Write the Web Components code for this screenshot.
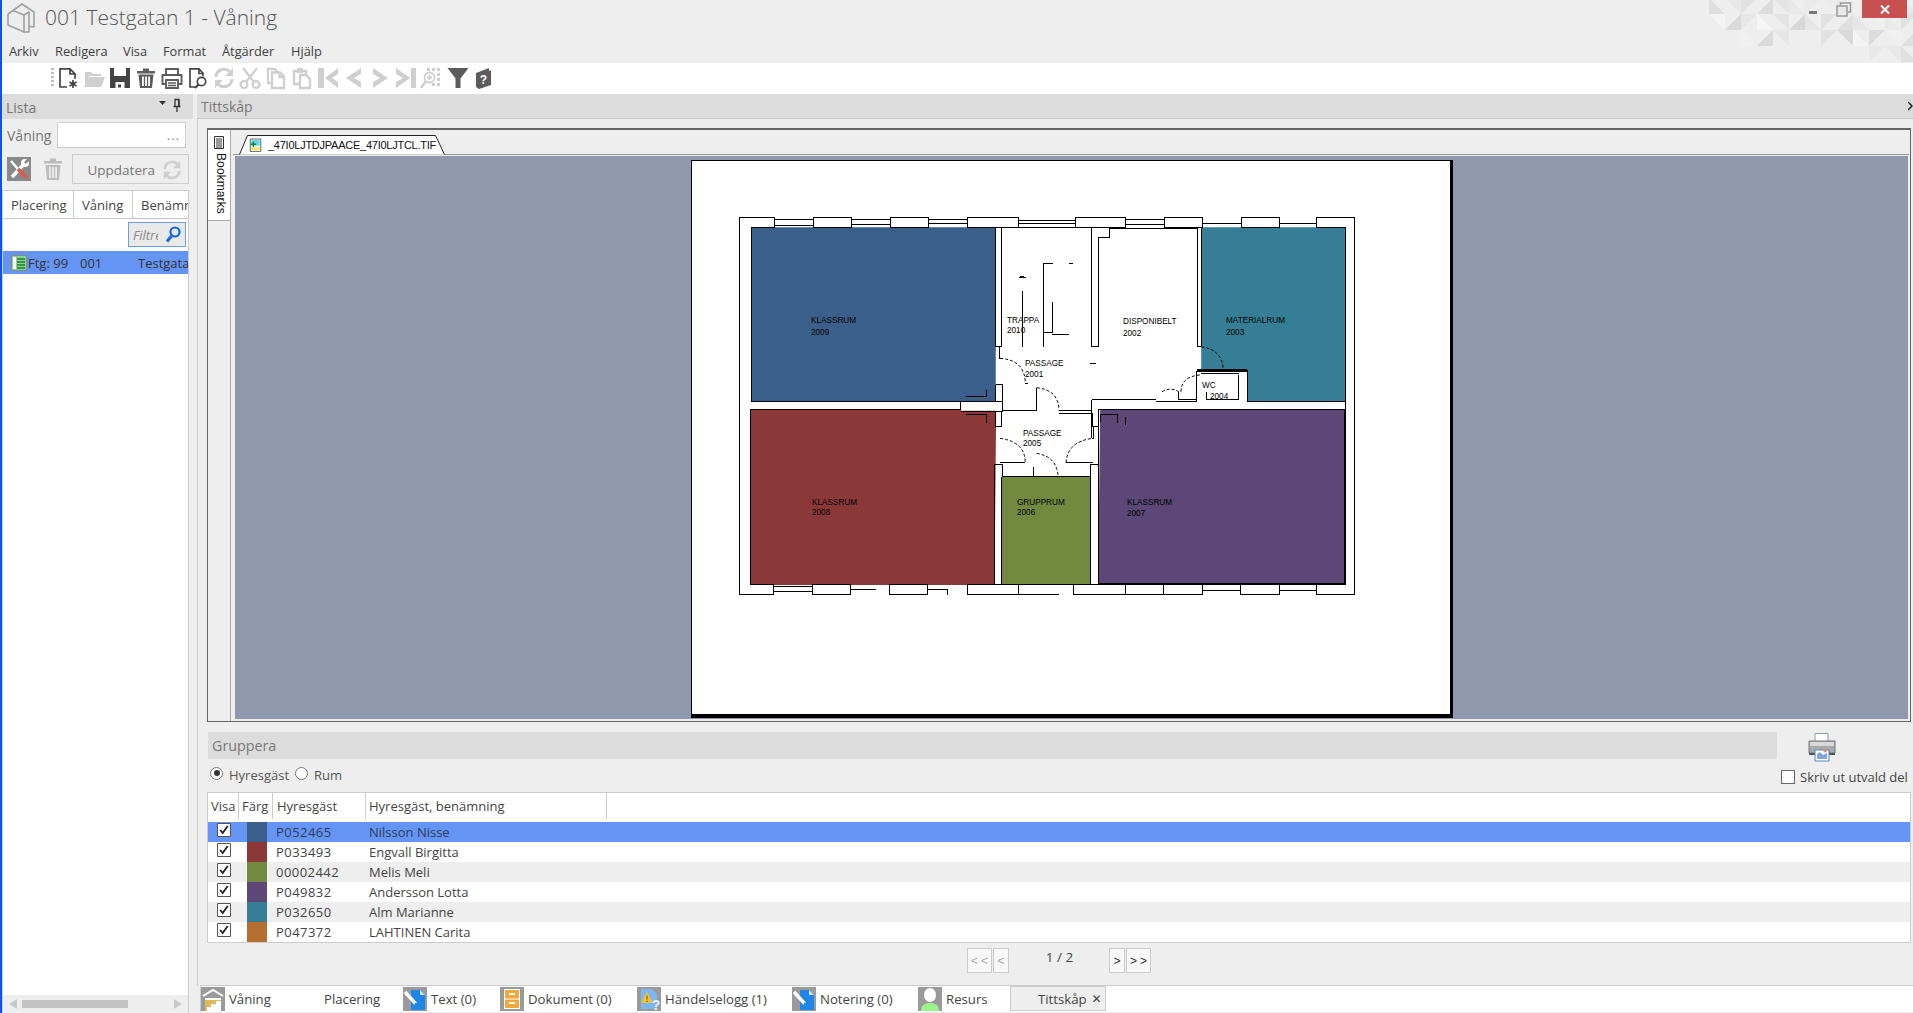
<!DOCTYPE html>
<html lang="sv">
<head>
<meta charset="utf-8">
<title>Våning</title>
<style>
    html, body { margin: 0; height: 100%; overflow: hidden; background: #eeeeee; }
    body { font-family: "Open Sans", "Noto Sans", sans-serif; font-size: 13px; color: #444; }
</style>
</head>
<body>
<app-shell></app-shell>
<script>
const ICONS = {
    newdoc: `<g fill="none" stroke="#444" stroke-width="1.7"><path d="M4 12V2.8h10l5 5v5M14 3v5h5M4 12v9h7"/></g><g stroke="#444" stroke-width="1.7"><path d="M17 14v8M13.5 16l7 4M20.5 16l-7 4"/></g>`,
    open: `<path fill="#cfcfcf" d="M3 9V6h6l2 2h8v2H7l-3 9-1-1zM7 11h16l-4 10H2z"/>`,
    save: `<path fill="#444" fill-rule="evenodd" d="M2 2h20v20H2zM6 2v8h12V2zM7.5 16v6h9v-6z"/><rect x="10" y="18.5" width="3" height="3" fill="#444"/>`,
    trash: `<path fill="#5c5c5c" fill-rule="evenodd" d="M3 5h18v2.4H3zM9 2.5h6V5H9zM4.5 8.5h15L18 22H6zM8 10.5V20h1.8v-9.5zM11.1 10.5V20h1.8v-9.5zM14.2 10.5V20H16v-9.5z"/>`,
    print: `<path fill="none" stroke="#5c5c5c" stroke-width="1.9" d="M6 8V3h12v5M6 18H2.5V9h19v9H18"/><path fill="none" stroke="#5c5c5c" stroke-width="1.9" d="M6 14h12v8H6z"/><path stroke="#5c5c5c" stroke-width="1.4" d="M8 17h8M8 19.5h8"/>`,
    preview: `<path fill="none" stroke="#444" stroke-width="1.7" d="M9 21H4V2.8h9l4 4.5v3M13 3v4.5h4"/><circle cx="15.5" cy="15.5" r="4.2" fill="none" stroke="#444" stroke-width="1.7"/><path stroke="#444" stroke-width="2.2" d="M12.5 18.5 9 22"/>`,
    refresh: `<g fill="none" stroke="#cfcfcf" stroke-width="3"><path d="M4 11a8 8 0 0 1 14-5"/><path d="M20 13a8 8 0 0 1-14 5"/></g><path fill="#cfcfcf" d="M21 2v8h-8zM3 22v-8h8z"/>`,
    cut: `<g fill="none" stroke="#cfcfcf" stroke-width="2.3"><circle cx="6" cy="18.5" r="3.4"/><circle cx="18" cy="18.5" r="3.4"/><path d="M8 16 19 2M16 16 5 2"/></g>`,
    copy: `<path fill="none" stroke="#cfcfcf" stroke-width="2.3" d="M8 17H4V3h7l3 3M8 6.5h8l4 4V22H8zM15.5 7v4H20"/>`,
    paste: `<path fill="none" stroke="#cfcfcf" stroke-width="2.3" d="M9 18H4V5h3M13 5h3v3M10 9h6l4 4v9H10z"/><path fill="#cfcfcf" d="M7 2h6v5H7z"/>`,
    first: `<path fill="#cfcfcf" d="M2 2h6v20H2zM22 2v6l-6 4 6 4v6L9 12z"/>`,
    prev: `<path fill="#cfcfcf" d="M19 2v6l-7 4 7 4v6L4 12z"/>`,
    next: `<path fill="#cfcfcf" d="M5 2v6l7 4-7 4v6l15-10z"/>`,
    last: `<path fill="#cfcfcf" d="M22 2h-5v20h5zM2 2v6l7 4-7 4v6l14-10z"/>`,
    zoom: `<g fill="#cfcfcf"><path d="M7 2h3v3H7zM12 2h3v3h-3zM17 2h3v3h-3zM17 7h3v3h-3zM17 12h3v3h-3zM12 17h3v3h-3zM17 17h3v3h-3z"/></g><circle cx="9.5" cy="11.5" r="5" fill="none" stroke="#cfcfcf" stroke-width="1.8"/><path stroke="#cfcfcf" stroke-width="1.8" d="M9.5 9v5M7 11.5h5"/><path stroke="#cfcfcf" stroke-width="2.4" d="M6 15l-5 7"/>`,
    funnel: `<path fill="#5c5c5c" d="M1.5 2h21l-8 10.5V22h-5V12.5z"/>`,
    book: `<path fill="#5c5c5c" d="M4 7l13-5v3l2-.7V19L7 23l-3-2z"/><text x="11.5" y="18" font-size="12" font-weight="700" text-anchor="middle" fill="#fff" font-family="Liberation Sans, sans-serif">?</text>`,
    house: `<rect width="24" height="24" fill="#9a9a9a"/><path fill="none" stroke="#fff" stroke-width="2" d="M2 9l10-6 10 6"/><path fill="#fff" d="M4 11h16v13H4z"/><path fill="#dcb95a" d="M6 22v-4h4v-3h5v-3h5v-1H4v11z" transform="translate(0 2)"/>`,
    note: `<rect width="24" height="24" fill="#9a9a9a"/><path fill="#1e86e8" d="M8 3h9l5 5v15H8z"/><path fill="#cfe6fb" d="M17 3l5 5h-5z"/><path stroke="#fff" stroke-width="3.4" d="M2 5l11 12"/><path fill="#1e86e8" d="M13 15l3 5-5-2z"/>`,
    cabinet: `<rect width="24" height="24" fill="#9a9a9a"/><path fill="#fff" d="M4 2h16v20H4z"/><path fill="#f2a93b" d="M5 3h14v8.5H5zM5 12.500h14V21H5z"/><path fill="#fff" d="M9 6h6v2H9zM9 15h6v2H9z"/>`,
    event: `<rect width="24" height="24" fill="#9a9a9a"/><path fill="#7db7f2" d="M4 2h11l5 5v15H4z"/><path fill="#f4c430" d="M10 5l6 11H4z"/><path stroke="#a36b00" stroke-width="1.4" d="M10 8.500v4M10 13.500v1.500"/><text x="19" y="23" font-size="14" font-weight="700" text-anchor="middle" fill="#eaf4ff" font-family="Liberation Sans, sans-serif">?</text>`,
    person: `<rect width="24" height="24" fill="#9a9a9a"/><ellipse cx="12" cy="8" rx="6" ry="7" fill="#fff"/><path fill="#9cf28a" d="M3 24c0-6 4-8 9-8s9 2 9 8z"/>`,
    sheetdoc: `<path fill="#fff" stroke="#222" stroke-width="1" d="M1.500 1.500h15v18h-15z"/><path fill="#5fd9e8" d="M3 3h12v8H3z"/><path fill="#f3e27a" d="M3 13h12v5H3z"/><path stroke="#0a8a2a" stroke-width="2" d="M2 9h8M6 5v8"/>`,
    listitem: `<path fill="#8fd08f" stroke="#888" d="M.5.5h15v15H.5z"/><path fill="#fff" d="M2 2h3v12H2z"/><path stroke="#1b7f35" stroke-width="1.500" d="M6 4h8M6 7h8M6 10h8M6 13h8"/>`
};

function svgIcon(name, size, box = 24) {
    return `<svg width="${size}" height="${size}" viewBox="0 0 ${box} ${box}" style="display:block;flex:none">${ICONS[name]}</svg>`;
}

class AppShell extends HTMLElement {
    constructor() {
        super();
        this.attachShadow({ mode: "open" });
    }

    connectedCallback() {
        this.shadowRoot.innerHTML = `
            <style>
                :host { display: flex; flex-direction: column; height: 1013px; border-left: 2px solid #0755f5; box-sizing: border-box; }
                .main { flex: 1; display: flex; min-height: 0; }
            </style>
            <title-bar></title-bar>
            <tool-bar></tool-bar>
            <div class="main">
                <list-panel></list-panel>
                <viewer-panel></viewer-panel>
            </div>
        `;
    }
}

class TitleBar extends HTMLElement {
    constructor() {
        super();
        this.attachShadow({ mode: "open" });
    }

    connectedCallback() {
        // triangle mosaic in the top right corner: col, row, shape, grey
        const mosaic = [
            [0,0,"a",222],[1,0,"b",232],[2,0,"c",226],[3,0,"d",220],[4,0,"b",228],[5,0,"a",232],[6,0,"c",234],[7,0,"b",236],[8,0,"a",232],[9,0,"c",238],[10,0,"a",234],[11,0,"b",232],[12,0,"a",230],
            [0,1,"b",244],[1,1,"d",218],[2,1,"c",230],[3,1,"a",246],[4,1,"b",228],[5,1,"d",216],[6,1,"a",230],[7,1,"c",226],[8,1,"d",224],[9,1,"a",230],[10,1,"b",240],[11,1,"a",234],[12,1,"c",226],
            [2,2,"a",240],[3,2,"d",218],[4,2,"b",230],[7,2,"c",226],[8,2,"b",218],[9,2,"a",244],[10,2,"c",220],[11,2,"b",240],[12,2,"d",224],
            [9,3,"a",238],[10,3,"c",232],[11,3,"b",232],[12,3,"a",224]
        ];
        const shapes = {
            a: (x, y) => `${x},${y} ${x},${y + 16} ${x + 16},${y + 16}`,
            b: (x, y) => `${x},${y} ${x + 16},${y} ${x + 16},${y + 16}`,
            c: (x, y) => `${x},${y} ${x + 16},${y} ${x},${y + 16}`,
            d: (x, y) => `${x + 16},${y} ${x + 16},${y + 16} ${x},${y + 16}`
        };
        const tris = mosaic.map(([c, r, s, g]) =>
            `<polygon points="${shapes[s](c * 16, r * 16 - 2)}" fill="rgb(${g},${g},${g})"/>`).join("");
        this.shadowRoot.innerHTML = `
            <style>
                :host { display: block; position: relative; height: 63px; background: #eeeeee; }
                .top { display: flex; align-items: center; height: 35px; padding-left: 5px; }
                .logo { margin-right: 10px; flex: none; }
                h1 { margin: 0; font: 300 21px "Open Sans", "Noto Sans", sans-serif; color: #555; white-space: nowrap; position: relative; top: -1px; }
                nav { display: flex; height: 28px; padding-top: 3px; box-sizing: border-box; align-items: center; font-size: 12.8px; color: #404040; padding-left: 7px; }
                nav span { white-space: nowrap; }
                .mosaic { position: absolute; right: 0; top: 0; }
                .winbtn { position: absolute; }
                .min { left: 1807px; top: 11px; width: 8px; height: 3px; background: #777; }
                .restore { left: 1834px; top: 2px; }
                .close { left: 1860px; top: 0; width: 45px; height: 18px; background: #c75050; display: flex; align-items: center; justify-content: center; }
            </style>
            <svg class="mosaic" width="204" height="63" viewBox="0 0 204 63">${tris}</svg>
            <div class="top">
                <svg class="logo" width="28" height="31" viewBox="0 0 28 31">
                    <g fill="none" stroke="#a0a0a0" stroke-width="1.6" stroke-linejoin="round">
                        <path d="M1 12 15 2l12 8v15l-5-.6"/><path d="M1 12v11l16 7V13L6 8.500"/><path d="M17 13l5-3v20l-5 0"/>
                    </g>
                </svg>
                <h1>001 Testgatan 1 - Våning</h1>
            </div>
            <nav>
                <span style="width:46px">Arkiv</span><span style="width:68px">Redigera</span><span style="width:40px">Visa</span><span style="width:59px">Format</span><span style="width:69px">Åtgärder</span><span>Hjälp</span>
            </nav>
            <div class="winbtn min"></div>
            <svg class="winbtn restore" width="16" height="15" viewBox="0 0 16 15"><g fill="none" stroke="#999" stroke-width="1.500"><path d="M4.500 3V1h10v9h-3"/><path d="M1 4h10v10H1z"/></g></svg>
            <div class="winbtn close"><svg width="10" height="9" viewBox="0 0 10 9"><path stroke="#fff" stroke-width="2" d="M1 .5l8 8M9 .5l-8 8"/></svg></div>
        `;
    }
}

class ToolBar extends HTMLElement {
    constructor() {
        super();
        this.attachShadow({ mode: "open" });
    }

    connectedCallback() {
        const names = ["newdoc", "open", "save", "trash", "print", "preview", "refresh", "cut", "copy", "paste", "first", "prev", "next", "last", "zoom", "funnel", "book"];
        this.shadowRoot.innerHTML = `
            <style>
                :host { display: flex; align-items: center; height: 31px; background: #fff; padding-bottom: 1px; box-sizing: border-box; }
                .grip { width: 3px; height: 20px; margin-left: 49px; margin-right: 1px; background: repeating-linear-gradient(#bbb 0 2px, transparent 2px 4px); }
                .btn { width: 26px; display: flex; justify-content: center; }
            </style>
            <div class="grip"></div>
            ${names.map(n => `<div class="btn">${svgIcon(n, 24)}</div>`).join("")}
        `;
    }
}

class PanelHeader extends HTMLElement {
    constructor() {
        super();
        this.attachShadow({ mode: "open" });
    }

    connectedCallback() {
        this.shadowRoot.innerHTML = `
            <style>
                :host { display: flex; align-items: center; justify-content: space-between; height: 25px; background: #dcdcdc; color: #777; font-size: 14px; line-height: 26px; padding: 2px 0 0 4px; box-sizing: border-box; white-space: nowrap; }
                .tools { display: flex; align-items: center; position: relative; top: -1px; }
            </style>
            <slot></slot>
            <div class="tools"><slot name="tools"></slot></div>
        `;
    }
}

class ListPanel extends HTMLElement {
    constructor() {
        super();
        this.attachShadow({ mode: "open" });
    }

    connectedCallback() {
        this.shadowRoot.innerHTML = `
            <style>
                :host { display: flex; flex-direction: column; width: 191px; flex: none; margin-right: 4px; }
                .form { padding: 2px 4px 0 5px; width: 182px; }
                .floor { display: flex; align-items: center; height: 28px; color: #777; }
                .floor label { width: 50px; font-size: 14px; }
                .floor .box { width: 129px; height: 26px; background: #fff; border: 1px solid #ccc; color: #888; text-align: right; padding-right: 5px; box-sizing: border-box; line-height: 24px; font-size: 13px; letter-spacing: 1px; }
                .actions { display: flex; align-items: center; height: 30px; margin-top: 5px; }
                .wrench { display: block; margin-right: 13px; flex: none; }
                .bin { margin-right: 10px; }
                .update { width: 117px; height: 30px; border: 1px solid #ccc; box-sizing: border-box; display: flex; align-items: center; justify-content: flex-end; gap: 6px; padding: 1px 5px 0 0; color: #777; font-size: 13.5px; margin-right: -1px; }
                .list { flex: 1; width: 187px; margin-top: 6px; background: #fff; border: 1px solid #ccc; border-bottom: 0; box-sizing: border-box; display: flex; flex-direction: column; overflow: hidden; }
                .head { display: grid; grid-template-columns: 71px 59px 1fr; height: 27px; border-bottom: 1px solid #ccc; flex: none; margin-bottom: -1px; }
                .head span { padding-left: 8px; line-height: 28px; color: #444; border-right: 1px solid #ccc; white-space: nowrap; overflow: hidden; }
                .head span:last-child { border-right: 0; }
                .filter { flex: none; height: 34px; display: flex; justify-content: flex-end; padding: 4px 2px 0 0; box-sizing: border-box; }
                .fbox { width: 58px; height: 25px; background: #e9e9e9; border: 1px solid #6f9fd8; box-sizing: border-box; display: flex; align-items: center; justify-content: space-between; padding: 0 4px 0 4px; color: #888; font-style: italic; font-size: 13px; }
                .fbox b { font-weight: 400; width: 25px; overflow: hidden; white-space: nowrap; }
                .row { display: grid; grid-template-columns: 65px 70px 1fr; height: 23px; flex: none; background: #6495f5; align-items: center; color: #333; white-space: nowrap; margin-top: -1px; }
                .row span { overflow: hidden; display: flex; align-items: center; min-width: 0; }
                .row .first { padding-left: 8px; gap: 1px; }
                .row .first b { font-weight: 400; }
                .spacer { flex: 1; }
                .scroll { flex: none; height: 18px; background: #eeeeee; display: flex; align-items: center; justify-content: space-between; padding: 0 6px; }
                .track { flex: 1; margin: 0 4px 0 5px; }
                .track div { width: 106px; height: 8px; background: #c2c2c2; }
            </style>
            <panel-header>Lista
                <svg slot="tools" width="30" height="20" viewBox="0 0 30 20" style="margin-right:4px">
                    <path fill="#333" d="M0 4h7L3.500 8z"/>
                    <path fill="none" stroke="#333" stroke-width="1.300" d="M16 2.500h4v7h-4zM14.500 9.500h7M18 10v5"/><path fill="#333" d="M19 3h1.500v6H19z"/>
                </svg>
            </panel-header>
            <div class="form">
                <div class="floor"><label>Våning</label><div class="box">...</div></div>
                <div class="actions">
                    <svg class="wrench" width="24" height="24" viewBox="0 0 24 24">
                        <rect width="24" height="24" fill="#8a8a8a"/>
                        <path stroke="#fff" stroke-width="3.500" d="M5 20 17 7"/><circle cx="18" cy="6" r="4" fill="#fff"/><path stroke="#8a8a8a" stroke-width="2.500" d="M18 6l4-4"/>
                        <path stroke="#fff" stroke-width="2.500" d="M4 4l7 8"/><path stroke="#e2574c" stroke-width="3.500" d="M11 12l9 9"/>
                    </svg>
                    <div class="bin"><svg width="18" height="24" viewBox="0 0 18 24" style="display:block"><path fill="#bcbcbc" fill-rule="evenodd" d="M0 4h18v2.500H0zM6 1.500h6V4H6zM1.500 8h15L15 23H3zM5 10v11h1.800V10zM8.100 10v11h1.800V10zM11.200 10v11H13V10z"/></svg></div>
                    <div class="update">Uppdatera ${svgIcon("refresh", 22)}</div>
                </div>
            </div>
            <div class="list">
                <div class="head"><span>Placering</span><span>Våning</span><span>Benämning</span></div>
                <div class="filter"><div class="fbox"><b>Filtrera</b>
                    <svg width="16" height="17" viewBox="0 0 16 17" style="flex:none"><circle cx="10" cy="6" r="4.500" fill="none" stroke="#1565e0" stroke-width="2.200"/><path stroke="#1565e0" stroke-width="3" d="M6.500 10 2 15.500"/></svg>
                </div></div>
                <div class="row"><span class="first">${svgIcon("listitem", 16, 16)}<b>Ftg: 9999</b></span><span style="padding-left:12px">001</span><span>Testgatan 1</span></div>
                <div class="spacer"></div>
                <div class="scroll">
                    <svg width="8" height="10" viewBox="0 0 8 10"><path fill="#c8c8c8" d="M8 0v10L0 5z"/></svg>
                    <div class="track"><div></div></div>
                    <svg width="8" height="10" viewBox="0 0 8 10"><path fill="#c8c8c8" d="M0 0v10l8-5z"/></svg>
                </div>
            </div>
        `;
    }
}

class ViewerPanel extends HTMLElement {
    constructor() {
        super();
        this.attachShadow({ mode: "open" });
    }

    connectedCallback() {
        this.shadowRoot.innerHTML = `
            <style>
                :host { flex: 1; min-width: 0; display: flex; flex-direction: column; }
                .head { border-bottom: 1px solid #c8c8c8; }
                .body { flex: 1; border-left: 1px solid #ccc; padding: 9px 2px 0 9px; display: flex; flex-direction: column; min-height: 0; }
            </style>
            <panel-header class="head">Tittskåp
                <svg slot="tools" width="5" height="10" viewBox="0 0 5 10"><path fill="none" stroke="#222" stroke-width="1.500" d="M0 1l4 4-4 4"/></svg>
            </panel-header>
            <div class="body">
                <doc-viewer><floor-plan></floor-plan></doc-viewer>
                <group-bar></group-bar>
                <tenant-table></tenant-table>
                <page-nav></page-nav>
            </div>
            <page-tabs></page-tabs>
        `;
    }
}

class DocViewer extends HTMLElement {
    constructor() {
        super();
        this.attachShadow({ mode: "open" });
    }

    connectedCallback() {
        this.shadowRoot.innerHTML = `
            <style>
                :host { display: grid; grid-template-columns: 23px 1fr; height: 594px; flex: none; border: 1px solid #666; border-top-width: 2px; box-sizing: border-box; background: #eeeeee; }
                .side { border-right: 1px solid #aaa; }
                .bm { background: #fff; height: 91px; border-bottom: 1px solid #aaa; box-sizing: border-box; padding: 6px 0 0 5px; }
                .bm span { writing-mode: vertical-rl; font: 12px "Liberation Sans", sans-serif; color: #111; margin: 4px 0 0 1px; display: block; letter-spacing: .1px; }
                .wrap { min-width: 0; display: flex; flex-direction: column; padding: 0 2px 2px 4px; }
                .strip { height: 25px; flex: none; position: relative; border-bottom: 1px solid #999; box-sizing: border-box; margin-right: -1px; margin-left: -2px; }
                .tab { position: absolute; left: 6px; bottom: -1px; width: 206px; height: 20px; }
                .tab svg.shape { position: absolute; left: 0; top: 0; }
                .tab .ic { position: absolute; left: 10px; top: 3px; }
                .tab b { position: absolute; left: 29px; top: 4px; font: 400 11px "Liberation Sans", sans-serif; color: #111; white-space: nowrap; letter-spacing: -.25px; }
                .stage { flex: 1; background: #9098ad; display: flex; justify-content: center; align-items: flex-start; padding: 4px 0 0 1px; min-height: 0; margin-top: 1px; }
            </style>
            <div class="side">
                <div class="bm">
                    <svg width="12" height="13" viewBox="0 0 12 13" style="display:block"><path fill="#fff" stroke="#333" d="M1.500.5h9v12h-9z"/><path stroke="#333" d="M3 3h6M3 5h6M3 7h6M3 9h6M3 11h6"/></svg>
                    <span>Bookmarks</span>
                </div>
            </div>
            <div class="wrap">
                <div class="strip">
                    <div class="tab">
                        <svg class="shape" width="206" height="20" viewBox="0 0 206 20"><path fill="#fff" stroke="#222" d="M.5 19.500 8.500.5h188l9 19"/></svg>
                        <svg class="ic" width="13" height="14" viewBox="0 0 18 20">${ICONS.sheetdoc}</svg>
                        <b>_47I0LJTDJPAACE_47I0LJTCL.TIF</b>
                    </div>
                </div>
                <div class="stage"><slot></slot></div>
            </div>
        `;
    }
}

class FloorPlan extends HTMLElement {
    constructor() {
        super();
        this.attachShadow({ mode: "open" });
    }

    connectedCallback() {
        const labels = [
            ["KLASSRUM", 812, 323], ["2009", 812, 335],
            ["TRAPPA", 1008, 323], ["2010", 1008, 333],
            ["PASSAGE", 1026, 366], ["2001", 1026, 377],
            ["DISPONIBELT", 1124, 324], ["2002", 1124, 336],
            ["MATERIALRUM", 1227, 323], ["2003", 1227, 335],
            ["WC", 1203, 388], ["2004", 1211, 399],
            ["PASSAGE", 1024, 436], ["2005", 1024, 446],
            ["KLASSRUM", 813, 505], ["2008", 813, 515],
            ["GRUPPRUM", 1018, 505], ["2006", 1018, 515],
            ["KLASSRUM", 1128, 505], ["2007", 1128, 516]
        ];
        // sheet starts at x 691, y 160 on the screen; plan crop was taken at 720,200
        const text = labels.map(([t, x, y]) => `<text x="${x - 693}" y="${y - 161}">${t}</text>`).join("");
        const walls = `
            M46 52V1185H128V1155H72 M46 52H130V82H75V604H572 M75 628H572V604H670V634H572 M75 628H72V1155
            M130 60H222 M130 78H222 M222 52H312V82H222Z M312 60H405 M312 74H405 M405 52H495V82H405Z M495 60H588 M495 72H588
            M588 52H710V82H588Z M710 62H845 M710 72H845 M845 52H962V82H845Z M962 58H1055 M962 74H1055 M1055 52H1145V82H1055Z
            M1145 70H1238 M1238 52H1330V82H1238Z M1330 72H1418 M1418 52H1508V1185H1418V1155H1486V82H1418Z
            M128 1160H220 M128 1174H220 M220 1155H310V1185H220Z M310 1168H370 M403 1155H493V1185H403Z M493 1170H540V1185
            M588 1155H708V1185H588Z M708 1158V1185H805 M840 1155H962V1185H840Z M962 1160V1185H1053 M1053 1155H1145V1185H1053Z
            M1145 1172H1236 M1236 1155H1328V1185H1236Z M1328 1172H1418
            M655 82V440H669V82 M669 82H883V440 M900 112V440H883 M900 112H926V85H1135V440H1143V82
            M718 272V440 M769 440V190H790 M790 305V398H769 M830 192H838 M788 405H830 M718 228l-8 6h16z
            M655 555H670V604 M655 555V604 M665 440V475H672 M725 552H732
            M670 632H752V563 M805 632H883 M805 642H883 M883 600V715 M883 600H1035 M1035 605H1132
            M1132 512H1252V604H1486V82 M1132 512V604 M1232 525V600H1155V575 M1090 575V600H1132 M1143 520H1232
            M900 628H1484V1150H898V628 M885 640V680H900V628 M883 715H888V680
            M655 634V680H669V634 M652 795H670V830H880V795H900 M652 795V1155 M669 830V1155H880V830
            M665 788H725 M822 788H885 M745 800V830 M585 590H633V570 M585 643H633V668 M903 665V643H945V668 M963 650V675 M880 490H893
            M898 1155H1484
        `;
        const doors = `
            M665 475Q725 480 725 550 M752 563Q805 570 805 632 M665 715Q725 725 725 788 M752 760Q800 770 803 828
            M822 788Q825 725 885 715 M1143 440Q1195 450 1195 510 M1095 575Q1095 530 1140 525 M1050 575Q1070 560 1090 575
        `;
        this.shadowRoot.innerHTML = `
            <style>
                :host { display: block; width: 758px; height: 553px; background: #fff; border: solid #000; border-width: 1px 3px 4px 1px; flex: none; position: relative; }
                svg { position: absolute; left: 0; top: 0; display: block; }
                text { font: 8.2px "Liberation Sans", sans-serif; fill: #000; }
            </style>
            <svg width="758" height="553" viewBox="0 0 758 553">
                <!-- measurements come from a stretched crop, x and y scale differently -->
                <g transform="translate(28 39) scale(.421 .33333)">
                    <path fill="#3a5f8a" d="M75 82H655V604H75z"/>
                    <path fill="#357e95" d="M1143 82H1486V604H1252V512H1143z"/>
                    <path fill="#8b3838" d="M72 628H656L652 1155H72z"/>
                    <path fill="#72893f" d="M669 830H880V1155H669z"/>
                    <path fill="#5d4777" d="M903 628H1486L1484 1152H898z"/>
                    <path fill="#fff" d="M572 606H670V632H572z"/>
                    <g fill="none" stroke="#000" stroke-width="1" shape-rendering="crispEdges">
                        <path d="${walls}" vector-effect="non-scaling-stroke"/>
                        <path d="M1132 512H1252" stroke-width="3" vector-effect="non-scaling-stroke"/>
                    </g>
                    <path d="${doors}" fill="none" stroke="#000" stroke-width="1" stroke-dasharray="3 2" vector-effect="non-scaling-stroke"/>
                </g>
                ${text}
            </svg>
        `;
    }
}

class GroupBar extends HTMLElement {
    constructor() {
        super();
        this.attachShadow({ mode: "open" });
    }

    connectedCallback() {
        this.shadowRoot.innerHTML = `
            <style>
                :host { display: grid; grid-template-columns: 1569px 1fr; height: 60px; margin: 10px 0 0 1px; flex: none; color: #555; }
                .title { height: 27px; background: #dcdcdc; padding-left: 4px; line-height: 28px; font-size: 14.3px; color: #777; }
                .radios { display: flex; align-items: center; height: 32px; padding-left: 2px; }
                .dot { width: 11px; height: 11px; border: 1px solid #777; border-radius: 50%; background: #fff; position: relative; top: -2px; margin-right: 6px; }
                .dot.on::after { content: ""; position: absolute; left: 2.500px; top: 2.500px; width: 6px; height: 6px; border-radius: 50%; background: #333; }
                .radios span { margin-right: 6px; }
                .print { padding-left: 4px; display: flex; flex-direction: column; align-items: flex-start; }
                .pic { margin: 0 0 6px 26px; flex: none; }
                .sel { display: flex; align-items: center; gap: 5px; white-space: nowrap; color: #444; font-size: 13px; }
                .cb { width: 12px; height: 12px; border: 1px solid #666; background: #fff; flex: none; }
            </style>
            <div>
                <div class="title">Gruppera</div>
                <div class="radios"><div class="dot on"></div><span>Hyresgäst</span><div class="dot"></div><span>Rum</span></div>
            </div>
            <div class="print">
                <svg class="pic" width="30" height="30" viewBox="0 0 30 30">
                    <path fill="#fff" stroke="#8a9bb5" d="M8 1.500h13v9H8z"/>
                    <path fill="#a9a9a9" stroke="#777" d="M2 9h26v12H2z"/><path fill="#d8d8d8" d="M3 10h24v4H3z"/>
                    <path fill="#555" d="M2 21h26v2H2z"/>
                    <path fill="#fff" stroke="#5b84b8" d="M8 18h14v11H8z"/><path fill="#7ea6d8" d="M10 22l3-2 3 3 4-2v6H10z"/><circle cx="18" cy="19" r="1.500" fill="#e88a4a"/>
                </svg>
                <div class="sel"><div class="cb"></div>Skriv ut utvald del</div>
            </div>
        `;
    }
}

class TenantTable extends HTMLElement {
    constructor() {
        super();
        this.attachShadow({ mode: "open" });
    }

    connectedCallback() {
        const rows = [
            ["P052465", "Nilsson Nisse", "#3a5f8a", "sel"],
            ["P033493", "Engvall Birgitta", "#8b3838", ""],
            ["00002442", "Melis Meli", "#72893f", "alt"],
            ["P049832", "Andersson Lotta", "#5d4777", ""],
            ["P032650", "Alm Marianne", "#357e95", "alt"],
            ["P047372", "LAHTINEN Carita", "#b56f33", ""]
        ];
        const check = `<svg width="14" height="14" viewBox="0 0 14 14" class="chk"><path fill="#fff" stroke="#555" d="M.5.5h13v13H.5z"/><path fill="none" stroke="#222" stroke-width="1.800" d="M3.200 7l2.500 3 5-7"/></svg>`;
        this.shadowRoot.innerHTML = `
            <style>
                :host { display: block; height: 151px; margin-top: 0; background: #fff; border: 1px solid #ccc; box-sizing: border-box; flex: none; overflow: hidden; }
                .head, .row { display: grid; grid-template-columns: 31px 34px 93px 241px 1fr; }
                .head { height: 26px; margin-bottom: 3px; }
                .head span { border-right: 1px solid #ccc; padding-left: 3px; line-height: 26px; white-space: nowrap; color: #444; font-size: 13px; }
                .head span:nth-child(3) { padding-left: 4px; }
                .head span:last-child { border-right: 0; }
                .row { height: 20px; align-items: center; color: #444; font-size: 13px; }
                .row span { padding-left: 3px; white-space: nowrap; }
                .row span.code { padding-left: 3px; letter-spacing: .45px; }
                .sel { background: #6495f5; color: #2d3b55; }
                .alt { background: #eeeeee; }
                .chk { margin: -4px 0 0 9px; display: block; }
                .swatch { width: 20px; height: 20px; margin-left: 8px; }
            </style>
            <div class="head"><span>Visa</span><span>Färg</span><span>Hyresgäst</span><span>Hyresgäst, benämning</span><span></span></div>
            ${rows.map(([code, name, color, cls]) => `
                <div class="row ${cls}">${check}<div class="swatch" style="background:${color}"></div><span class="code">${code}</span><span>${name}</span><span></span></div>
            `).join("")}
        `;
    }
}

class PageNav extends HTMLElement {
    constructor() {
        super();
        this.attachShadow({ mode: "open" });
    }

    connectedCallback() {
        this.shadowRoot.innerHTML = `
            <style>
                :host { display: flex; height: 25px; margin-top: 5px; padding-left: 760px; flex: none; font-size: 13.5px; color: #444; }
                .b { height: 25px; border: 1px solid #ccc; background: #f8f8f8; box-sizing: border-box; display: flex; align-items: center; justify-content: center; margin-right: 1px; font: 12px "Liberation Sans", sans-serif; color: #333; }
                .dbl { letter-spacing: 3px; padding-left: 3px; }
                .off { color: #aaa; }
                .count { width: 99px; text-align: center; position: relative; top: -3px; line-height: 25px; }
            </style>
            <div class="b off dbl" style="width:25px">&lt;&lt;</div><div class="b off" style="width:16px">&lt;</div>
            <div class="count">1 / 2</div>
            <div class="b" style="width:16px">&gt;</div><div class="b dbl" style="width:25px">&gt;&gt;</div>
        `;
    }
}

class PageTabs extends HTMLElement {
    constructor() {
        super();
        this.attachShadow({ mode: "open" });
    }

    connectedCallback() {
        const tabs = [
            ["house", "Våning", 95], ["", "Placering", 107], ["note", "Text (0)", 97], ["cabinet", "Dokument (0)", 137],
            ["event", "Händelselogg (1)", 155], ["note", "Notering (0)", 126], ["person", "Resurs", 92]
        ];
        this.shadowRoot.innerHTML = `
            <style>
                :host { display: flex; height: 26px; flex: none; background: #fff; border-top: 1px solid #ccc; margin-left: 3px; margin-bottom: 1px; color: #444; font-size: 13.2px; white-space: nowrap; border-left: 1px solid #ccc; margin-top: -1px; }
                .tab { display: flex; align-items: center; height: 24px; box-sizing: border-box; margin-top: 1px; }
                .ic { width: 24px; margin-right: 4px; flex: none; }
                .cur { width: 96px; height: 25px; margin-top: 0; background: #eeeeee; border: 1px solid #ccc; padding-left: 27px; gap: 5px; }
                .x { font-size: 12px; font-family: "DejaVu Sans", sans-serif; font-weight: 700; color: #444; }
                .fill { flex: 1; }
            </style>
            ${tabs.map(([icon, label, w]) => `<div class="tab" style="width:${w}px"><div class="ic">${icon ? svgIcon(icon, 24) : ""}</div>${label}</div>`).join("")}
            <div class="tab cur">Tittskåp <span class="x">✕</span></div>
            <div class="fill"></div>
        `;
    }
}

customElements.define("panel-header", PanelHeader);
customElements.define("title-bar", TitleBar);
customElements.define("tool-bar", ToolBar);
customElements.define("list-panel", ListPanel);
customElements.define("floor-plan", FloorPlan);
customElements.define("doc-viewer", DocViewer);
customElements.define("group-bar", GroupBar);
customElements.define("tenant-table", TenantTable);
customElements.define("page-nav", PageNav);
customElements.define("page-tabs", PageTabs);
customElements.define("viewer-panel", ViewerPanel);
customElements.define("app-shell", AppShell);
</script>
</body>
</html>
